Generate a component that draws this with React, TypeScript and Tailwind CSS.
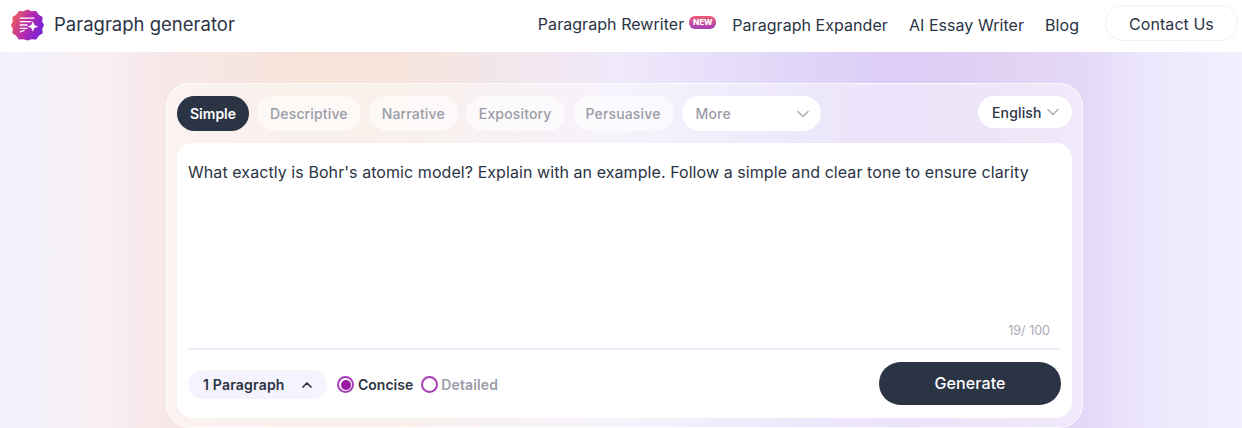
import { ChevronDown, ChevronUp } from "lucide-react";

const tabs = ["Descriptive", "Narrative", "Expository", "Persuasive"];

function Logo() {
  return (
    <svg width="33" height="33" viewBox="0 0 34 34" className="shrink-0">
      <defs>
        <linearGradient id="logo-grad" x1="0" y1="0.3" x2="1" y2="0.7">
          <stop offset="0" stopColor="#f0605a" />
          <stop offset="0.5" stopColor="#b52bb0" />
          <stop offset="1" stopColor="#6f1fd8" />
        </linearGradient>
      </defs>
      <path
        d="M17 1.5l4.3 1.9 4.7-.4 2.6 3.9 4 2.5-.4 4.7 1.9 3.4-1.9 3.9.4 4.7-4 2.5-2.6 3.9-4.7-.4-4.3 1.4-4.3-1.4-4.7.4-2.6-3.9-4-2.5.4-4.7-1.9-3.9 1.9-3.4-.4-4.7 4-2.5L8 3l4.7.4z"
        fill="url(#logo-grad)"
      />
      <g stroke="#fff" strokeWidth="1.4" strokeLinecap="round" fill="none">
        <path d="M9.5 10.5h14M9.5 14h11M9.5 17.5h7M9.5 21h7M9.5 24.5l4-1.5" />
      </g>
      <path d="M22.5 13.5l1.6 3.9 3.9 1.6-3.9 1.6-1.6 3.9-1.6-3.9-3.9-1.6 3.9-1.6z" fill="#fff" />
    </svg>
  );
}

export default function App() {
  return (
    <div className="h-[428px] w-[1242px] overflow-hidden bg-white font-['Inter',sans-serif] text-[#2b3444]">
      <header className="flex h-[52px] items-center justify-between bg-white pb-[3px] pl-[11px] pr-[4px]">
        <div className="flex items-center gap-[10px]">
          <Logo />
          <span className="text-[18.5px] text-[#2b3444]">Paragraph generator</span>
        </div>
        <nav className="flex items-center text-[16px] tracking-[0.05px] text-[#2b3444]">
          <span className="mt-[-2px]">Paragraph Rewriter</span>
          <span className="mb-[5px] ml-[5px] flex h-[13px] w-[27px] items-center justify-center rounded-[6px] bg-gradient-to-b from-[#ef5a72] to-[#a63cb5] text-[8px] font-extrabold leading-none text-white">
            NEW
          </span>
          <span className="ml-[16px]">Paragraph Expander</span>
          <span className="ml-[21px]">AI Essay Writer</span>
          <span className="ml-[21px]">Blog</span>
          <button className="ml-[26px] mt-[-3px] h-[36px] w-[133px] rounded-[18px] border border-[#f0eefa] bg-white pt-[1px] text-[16px] text-[#2b3444]">
            Contact Us
          </button>
        </nav>
      </header>

      <main className="flex h-[376px] justify-center bg-[linear-gradient(90deg,#f2f2ff_0%,#f5f0f7_4.8%,#f9eff2_8%,#f7e7e8_13.3%,#f6e3da_24%,#f6e4dc_32%,#efe9fb_50%,#e0d6f8_64%,#dccdf7_72%,#e2d0f3_80.5%,#e4d9f8_87.3%,#e9e0fa_90%,#ece6fc_92%,#f2effe_100%)] pl-[7px] pt-[31px]">
        <section className="h-[345px] w-[917px] rounded-[24px] border border-white/80 bg-white/45 px-[10px] pt-[12px]">
          <div className="flex items-start justify-between">
            <div className="flex gap-[8px] tracking-[0.15px]">
              <button className="h-[35px] rounded-full bg-[#2b3444] px-[13px] text-[14px] font-semibold tracking-normal text-white">
                Simple
              </button>
              {tabs.map((tab) => (
                <button
                  key={tab}
                  className="h-[35px] rounded-full bg-white/60 px-[13px] text-[14px] font-medium text-[#9b9ca8]"
                >
                  {tab}
                </button>
              ))}
              <div className="flex h-[35px] w-[139px] items-center justify-between rounded-full bg-white pl-[14px] pr-[8px] text-[14px] font-medium text-[#9b9ca8]">
                More
                <ChevronDown size={20} strokeWidth={1.7} className="text-[#a9abb6]" />
              </div>
            </div>
            <div className="flex h-[32px] w-[94px] items-center justify-between rounded-full bg-white pl-[14px] pr-[9px] text-[14px] font-medium tracking-[0.15px] text-[#2b3444]">
              English
              <ChevronDown size={20} strokeWidth={1.7} className="text-[#a9abb6]" />
            </div>
          </div>

          <div className="mt-[12px] flex h-[275px] flex-col rounded-[16px] bg-white px-[11px]">
            <p className="mt-[18px] text-[16px] leading-[22px] tracking-[0.07px] text-[#2b3444]">
              What exactly is Bohr's atomic model? Explain with an example. Follow a simple and clear tone to ensure clarity
            </p>
            <div className="mt-auto translate-y-[3px] pr-[11px] text-right text-[12.5px] text-[#a9abb6]">19/ 100</div>
            <div className="mt-[10px] flex h-[70px] items-start justify-between border-t-2 border-[#f0eefa]">
              <div className="mt-[20px] flex items-center">
                <div className="flex h-[29px] w-[139px] items-center justify-between rounded-full bg-[#f5f3fe] pl-[15px] pr-[12px] text-[14px] font-semibold tracking-[0.2px] text-[#2b3444]">
                  1 Paragraph
                  <ChevronUp size={16} strokeWidth={2.6} />
                </div>
                <span className="ml-[10px] flex h-[17px] w-[17px] items-center justify-center rounded-full border-2 border-[#a83db8]">
                  <span className="h-[10px] w-[10px] rounded-full bg-[#99189f]" />
                </span>
                <span className="ml-[4px] text-[14px] font-semibold text-[#2b3444]">Concise</span>
                <span className="ml-[8px] h-[17px] w-[17px] rounded-full border-2 border-[#a83db8]" />
                <span className="ml-[3px] text-[14px] font-semibold tracking-[0.15px] text-[#9b9ca8]">Detailed</span>
              </div>
              <button className="mt-[12px] h-[43px] w-[182px] rounded-full bg-[#2b3444] pb-[1px] text-[16px] font-medium tracking-[0.1px] text-white">
                Generate
              </button>
            </div>
          </div>
        </section>
      </main>
    </div>
  );
}
